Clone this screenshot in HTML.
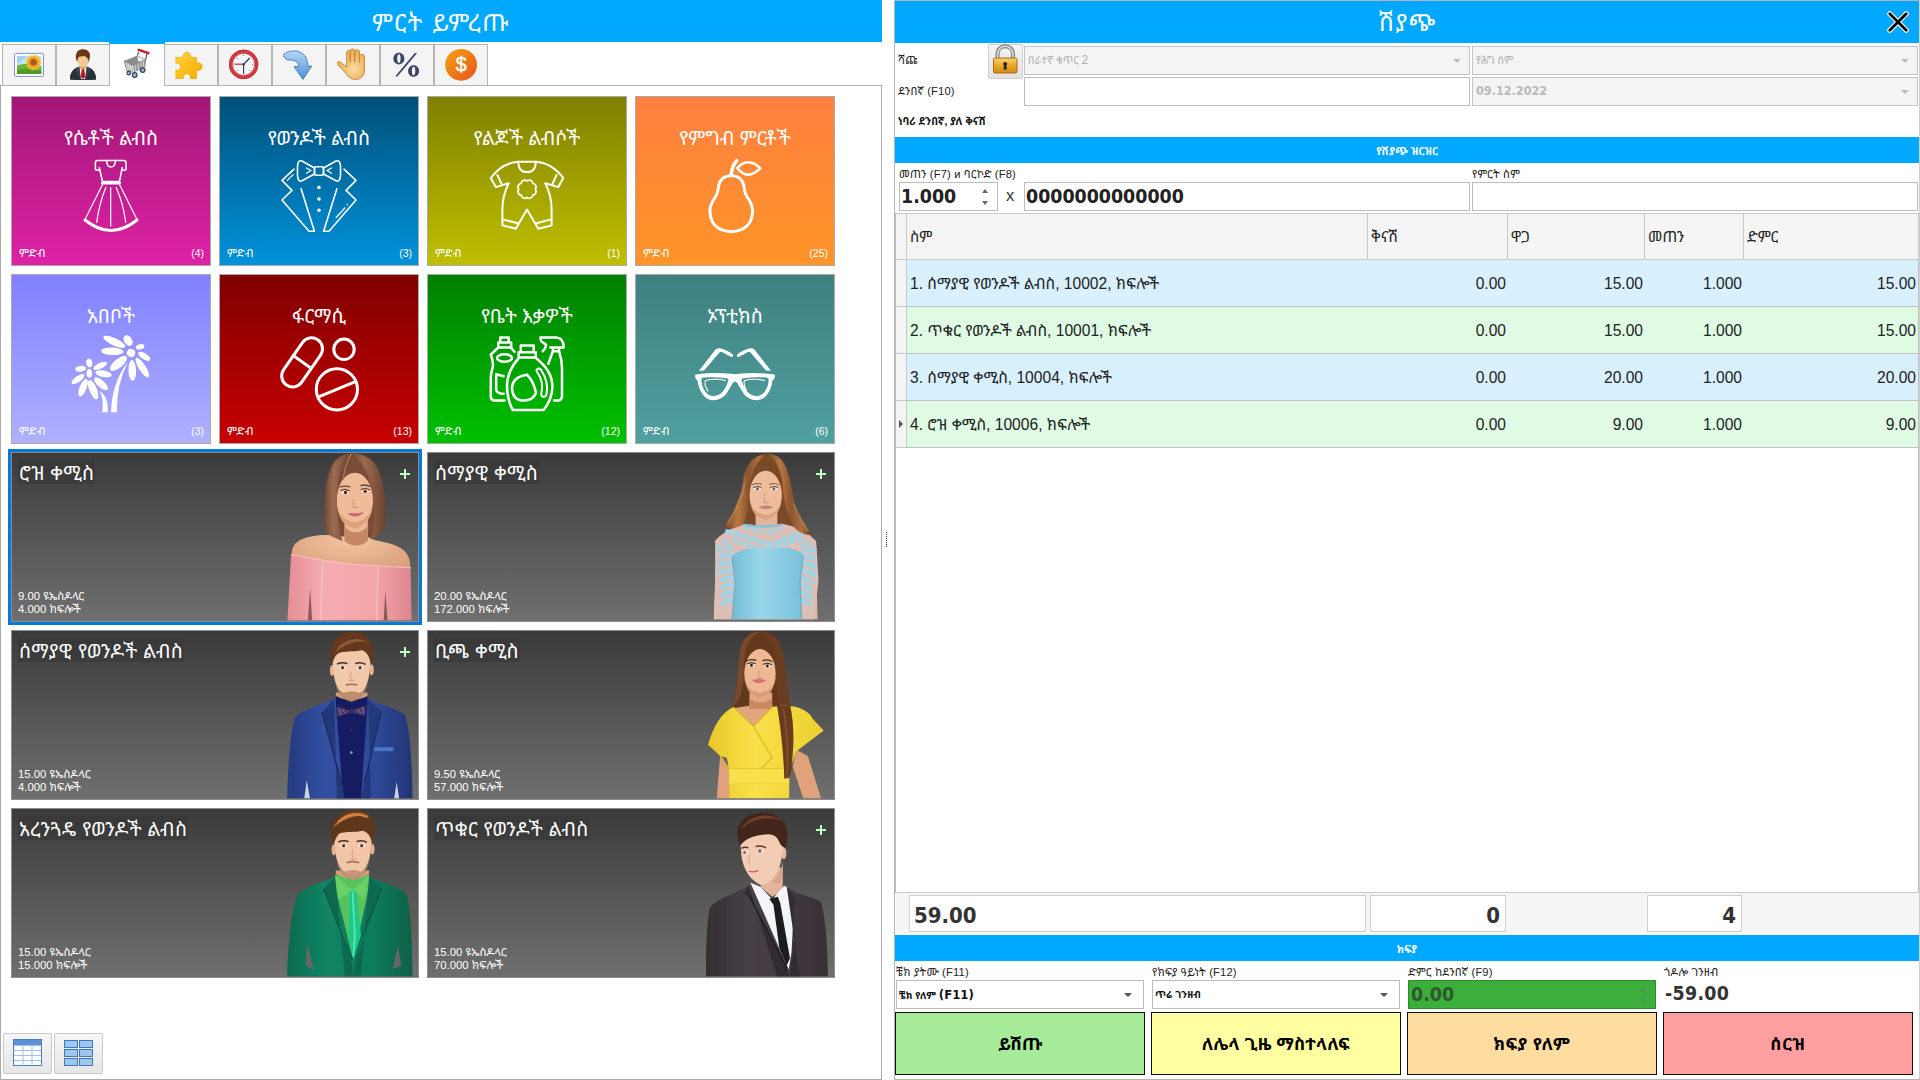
<!DOCTYPE html>
<html lang="am">
<head>
<meta charset="utf-8">
<title>ሽያጭ</title>
<style>
*{box-sizing:border-box;margin:0;padding:0}
html,body{width:1920px;height:1080px;overflow:hidden;background:#fff}
body{position:relative;font-family:"Liberation Sans","Noto Sans Ethiopic","Ebrima","Nyala","Abyssinica SIL",sans-serif;font-size:11px;color:#222}
.abs{position:absolute}
.blue{background:#00a8ff}
/* ---------- left panel ---------- */
#lhead{left:0;top:0;width:882px;height:42px}
#ltitle{left:0;top:9px;width:882px;text-align:center;color:#fff;font-size:24px;line-height:28px;letter-spacing:1.6px}
#lbody{left:0;top:85px;width:882px;height:995px;border:1px solid #acacac;background:#fff}
.tab{position:absolute;top:44px;width:54px;height:42px;background:#f4f4f4;border:1px solid #b4b4b4}
.tab.on{top:44px;height:43px;background:#fff;border:0;width:54px}
.tab svg{position:absolute;left:10px;top:3px;width:32px;height:32px}
.tile{position:absolute;width:200px;height:170px;border:1px solid #a9a9a9;color:#fff}
.tile .tt{position:absolute;left:0;right:0;top:28px;text-align:center;font-size:19.5px;line-height:26px;white-space:nowrap}
.tile .cat{position:absolute;left:7px;bottom:5px;font-size:11.5px;line-height:14px;letter-spacing:.4px}
.tile .cnt{position:absolute;right:6px;bottom:5px;font-size:10.5px;line-height:14px}
.tile svg{position:absolute;left:-1px;top:-1px;width:200px;height:170px}
.card{position:absolute;width:408px;height:170px;border:1px solid #8d8d8d;background:linear-gradient(#3b3b3b,#6f6f6f);color:#fff;overflow:hidden}
.card .nm{position:absolute;left:6px;top:7px;height:24px;padding:0 1px 0 1px;background:rgba(52,52,52,.5);font-size:19.5px;line-height:26px;letter-spacing:.3px;white-space:nowrap}
.card .pr{position:absolute;left:6px;bottom:5px;font-size:11.3px;line-height:13px;white-space:nowrap}
.card .plus{position:absolute;right:8px;top:16px;width:10px;height:10px}
.card .plus:before{content:"";position:absolute;left:0;top:4px;width:10px;height:2px;background:#bfffc0}
.card .plus:after{content:"";position:absolute;left:4px;top:0;width:2px;height:10px;background:#bfffc0}
.card svg.ph{position:absolute;left:268px;top:-3px;width:140px;height:175px}
#sel{left:8px;top:449px;width:414px;height:176px;border:3px solid #0a78d7}
.vbtn{position:absolute;top:1033px;width:49px;height:41px;border:1px solid #c9c9c9;border-radius:2px;background:linear-gradient(#f6f6f6,#e6e6e6)}
.vbtn svg{position:absolute;left:9px;top:5px;width:30px;height:28px}
/* ---------- right panel ---------- */
#rpanel{left:894px;top:0;width:1026px;height:1080px;border:1px solid #b4b4b4;border-right:1px solid #d0d0d0;background:#fff}
#rhead{left:895px;top:1px;width:1024px;height:42px}
#rtitle{left:895px;top:9px;width:1025px;text-align:center;color:#fff;font-size:24px;line-height:28px;letter-spacing:.6px}
.lbl{position:absolute;font-size:11.2px;line-height:14px;letter-spacing:.15px;white-space:nowrap;color:#222;margin-left:-1px}
.inp{position:absolute;background:#fff;border:1px solid #bdbdbd}
.inp.dis{background:#f4f4f4;border-color:#c4c4c4;color:#b0b0b0}
.inp .tx{position:absolute;left:3px;top:0;white-space:nowrap}
.arr{position:absolute;right:8px;top:50%;margin-top:-2px;width:0;height:0;border-left:4px solid transparent;border-right:4px solid transparent;border-top:4px solid #555}
.dis .arr{border-top-color:#bcbcbc}
.bar{position:absolute;left:895px;width:1024px;height:26px;color:#fff;text-align:center;font-weight:bold;font-size:10.5px;line-height:28px;overflow:hidden}
.big{font-family:"DejaVu Sans Condensed","DejaVu Sans","Liberation Sans",sans-serif;font-weight:bold;font-size:19.4px;color:#222}
#grid{left:895px;top:213px;width:1024px;height:680px;border:1px solid #c0c0c0;background:#fff}
.hd{position:absolute;top:213px;height:47px;background:#f5f5f5;border-right:1px solid #c9c9c9;border-bottom:1px solid #c9c9c9;border-top:1px solid #c9c9c9;font-size:15px;line-height:46px;padding-left:3px;color:#222}
.row{position:absolute;left:907px;width:1011px;height:47px;border-bottom:1px solid #bfbfbf;font-size:15.6px;line-height:47px;color:#222}
.row.b{background:#d8f0ff}
.row.g{background:#dffbe3}
.row span{position:absolute;top:0;white-space:nowrap}
.row .n{left:3px}
.row .r{text-align:right}
.ind{position:absolute;left:896px;width:11px;height:47px;background:#f5f5f5;border-right:1px solid #c9c9c9;border-bottom:1px solid #c9c9c9}
.btn{position:absolute;top:1012px;width:250px;height:63px;border:1px solid #111;text-align:center;font-weight:bold;font-size:17.2px;line-height:62px;color:#000}
#closex{left:1887px;top:11px;width:22px;height:22px}
#lock{left:988px;top:44px;width:35px;height:35px;border:1px solid #d0d0d0;border-radius:2px;background:linear-gradient(#f4f4f4,#e2e2e2)}
#fbar{left:896px;top:892px;width:1023px;height:43px;background:#f5f5f5;border-top:1px solid #c9c9c9}
.tot{top:895px;height:37px;border-color:#cfcfcf}
.tot .tx{line-height:39px;font-size:22px;color:#333}
.cur{position:absolute;left:3px;top:19px;width:0;height:0;border-top:4px solid transparent;border-bottom:4px solid transparent;border-left:4px solid #555}
#split{left:886px;top:532px;width:1px;height:16px;background:repeating-linear-gradient(#333 0 1px,transparent 1px 2px)}
</style>
</head>
<body>
<!-- LEFT PANEL -->
<div class="abs blue" id="lhead"></div>
<div class="abs" id="ltitle">ምርት ይምረጡ</div>
<div class="abs" id="lbody"></div>
<div id="tabs">
<div class="tab" style="left:2px"><svg viewBox="0 0 32 32"><rect x="1.500" y="5.400" width="29" height="23" rx="1" fill="#fff" stroke="#7f8fd0" stroke-width="1"/><rect x="4" y="8" width="24.300" height="18" fill="#bfe3f7"/><path d="M4 8h10l-10 8z" fill="#9fd0f0"/><path d="M4 17.500Q14 14 28.300 18V26H4z" fill="#6db535"/><path d="M4 22Q16 19 28.300 23V26H4z" fill="#4f9a23"/><circle cx="20.500" cy="14.500" r="6.800" fill="#f4a620"/><circle cx="20.500" cy="14.500" r="6.800" fill="none" stroke="#f9c74a" stroke-width="2.400" stroke-dasharray="1.500 1.300"/><circle cx="20.500" cy="14.300" r="3.300" fill="#a85a1c"/></svg></div>
<div class="tab" style="left:56px"><svg viewBox="0 0 32 32"><path d="M3 31.500C3 23 8 19.500 12.500 18.500L16 20l3.500-1.500C24 19.500 29 23 29 31.500Q16 32.500 3 31.500z" fill="#3b424c"/><path d="M3 31.500C3 26 5 23 8 21L14 31.800zM29 31.500C29 26 27 23 24 21L18 31.800z" fill="#2a3038"/><path d="M12.500 18.800L16 22.500l3.500-3.700L18 31h-4z" fill="#fff"/><path d="M14.800 20.500h2.400l1 8.500L16 31l-2.200-2z" fill="#c4161c"/><path d="M13 15h6v5l-3 1.500-3-1.500z" fill="#d9a066"/><ellipse cx="16.200" cy="12.700" rx="5.500" ry="6.700" fill="#f3c894"/><path d="M10.300 14C7 8 9.500 1.500 15 1.200 21 .5 24.500 5 22.500 11 22.300 13 22 14 21.800 14.500 21.500 11 20 8.500 17 8 14 8.500 11.500 8 10.800 11 10.500 12.500 10.500 13.500 10.300 14z" fill="#6b3514"/></svg></div>
<div class="abs blue" style="left:109px;top:42px;width:56px;height:2px"></div>
<div class="tab on" style="left:110px"><svg viewBox="0 0 32 32" style="left:11px;top:2px"><path d="M17.800 6L16.400 9.600M25.900 7.800L24.700 13.600" stroke="#4a4a52" stroke-width="1.100"/><path d="M17.600 3.800L27.500 7.200" stroke="#c81e28" stroke-width="2.400" stroke-linecap="round"/><path d="M3.100 14.900L16.400 9.500L24.700 13.400L11.400 19.600z" fill="#8c8c8c"/><path d="M16.400 10.300L23.800 13.700L23.200 17.800L17 14.900z" fill="#f4f4f4"/><path d="M3.100 14.900L11.400 19.600L12.500 26.100L6 25z" fill="#b9b9b9" stroke="#6e6e6e" stroke-width=".7"/><path d="M11.400 19.600L24.700 13.400L23.800 20.800L12.500 26.100z" fill="#9a9a9a" stroke="#6e6e6e" stroke-width=".7"/><path d="M5 16.200l1.800 8.800M7 17.200l1.500 8M9.200 18.400l1.300 7.400M14 18.600l.8 6.400M17 17.200l.6 6.500M20 15.800l.4 6.400M22.500 14.600l.2 6.200" stroke="#e8e8e8" stroke-width=".7"/><path d="M11.400 19.600L12.500 26.100" stroke="#fff" stroke-width="1"/><g fill="#9ab6d2" stroke="#2f4258" stroke-width="1.200"><circle cx="7.800" cy="27" r="1.800"/><circle cx="13.700" cy="29" r="2.300"/><circle cx="21.700" cy="24.100" r="2.300"/></g></svg></div>
<div class="tab" style="left:164px"><svg viewBox="0 0 32 32"><defs><linearGradient id="pz" x1="0" y1="0" x2="1" y2="1"><stop offset="0" stop-color="#ffd83a"/><stop offset="1" stop-color="#f5a800"/></linearGradient></defs><path d="M.8 9.300H8.700A3.600 3.600 0 1 1 15.100 9.300H21.600V15.300A3.800 3.800 0 1 1 21.600 21.900V30.500H15.200A3.500 3.500 0 1 0 8.600 30.500H.8V21.900A3.500 3.500 0 1 0 .8 15.300z" fill="url(#pz)" stroke="#eda400" stroke-width=".6"/></svg></div>
<div class="tab" style="left:218px"><svg viewBox="0 0 32 32"><circle cx="14.600" cy="16.400" r="12.900" fill="#f3f7fc" stroke="#d4393d" stroke-width="3.400"/><circle cx="14.600" cy="16.400" r="14.400" fill="none" stroke="#b82428" stroke-width=".6"/><circle cx="14.600" cy="16.400" r="11" fill="none" stroke="#a82226" stroke-width=".6"/><path d="M14.600 16.400l6.200-6.400" stroke="#2f3b55" stroke-width="1.300"/><path d="M14.600 16.400v9.600" stroke="#2f3b55" stroke-width="1.100"/><path d="M14.600 16.200H5.400" stroke="#d4393d" stroke-width="1.300"/><circle cx="14.600" cy="16.400" r="1.200" fill="#2f3b55"/><g fill="#555"><circle cx="14.600" cy="7.400" r=".5"/><circle cx="23.600" cy="16.400" r=".5"/><circle cx="8.300" cy="10.200" r=".5"/><circle cx="20.900" cy="22.600" r=".5"/><circle cx="8.300" cy="22.600" r=".5"/></g></svg></div>
<div class="tab" style="left:272px"><svg viewBox="0 0 32 32"><defs><linearGradient id="ar" x1="0" y1="0" x2="0" y2="1"><stop offset="0" stop-color="#b4d8f4"/><stop offset="1" stop-color="#4f8fd4"/></linearGradient></defs><path d="M-.4 7.500C4 3 10 2.500 14 3.200C20.500 4.500 24.500 9 24.800 18.100H28.800L19.900 31.400L11.100 18.600H15.900C15.600 14 12 11.500 4.400 12z" fill="url(#ar)" stroke="#3f78c4" stroke-width=".9"/></svg></div>
<div class="tab" style="left:326px"><svg viewBox="0 0 32 32"><defs><radialGradient id="hd" cx=".6" cy=".65" r=".5"><stop offset="0" stop-color="#f9d9a0"/><stop offset="1" stop-color="#efb360"/></radialGradient></defs><path d="M9.700 19V4.300C9.700 1.800 13.300 1.800 13.300 4.300V13V2.900C13.300 .3 17.700 .3 17.700 2.900V13V3.700C17.700 1.200 22.500 1.200 22.500 3.700V13.500V8.200C22.500 5.800 27.400 5.800 27.400 8.200V22C27.400 27.500 24 31.400 18.500 31.400C14 31.400 11.500 29 9 25.500L.8 16.500C-.7 14.500 1.500 12.600 3.400 14.200z" fill="url(#hd)" stroke="#c78a3c" stroke-width="1"/><path d="M13.300 5V14.500M17.700 4V14.500M22.500 5V15" stroke="#c78a3c" stroke-width="1" fill="none"/></svg></div>
<div class="tab" style="left:380px"><svg viewBox="0 0 32 32"><g fill="#3a4566"><path d="M7.900 4.800C4.800 4.800 2.400 7.300 2.400 10.600S4.800 16.400 7.900 16.400 13.400 13.900 13.400 10.600 11 4.800 7.900 4.800zM7.900 6.300C9 6.300 9.600 8 9.600 10.600S9 14.900 7.900 14.900 6.200 13.200 6.200 10.600 6.800 6.300 7.900 6.300z" fill-rule="evenodd"/><path d="M22.600 17.200C19.500 17.200 17.100 19.700 17.100 23S19.500 28.800 22.600 28.800 28.100 26.300 28.100 23 25.700 17.200 22.600 17.200zM22.600 18.700C23.700 18.700 24.300 20.400 24.300 23S23.700 27.300 22.600 27.300 20.900 25.600 20.900 23 21.500 18.700 22.600 18.700z" fill-rule="evenodd"/><path d="M23.800 5L26 5.200L6.400 28.500L4.300 28.300z"/></g></svg></div>
<div class="tab" style="left:434px"><svg viewBox="0 0 32 32" style="overflow:visible;left:11px"><defs><linearGradient id="dl" x1="0" y1="0" x2="1" y2="1"><stop offset="0" stop-color="#f6a20c"/><stop offset="1" stop-color="#e8541f"/></linearGradient></defs><circle cx="15.100" cy="16.800" r="15.900" fill="url(#dl)"/><text x="15.100" y="23.200" text-anchor="middle" font-family="Liberation Sans,sans-serif" font-weight="normal" font-size="19.500" stroke="#fff" stroke-width=".5" fill="#fff">$</text></svg></div>
</div>
<div id="tiles">
<div class="tile" style="left:11px;top:96px;background:linear-gradient(#a21776,#de22a6)"><svg viewBox="0 0 200 170"><g fill="none" stroke="#fff" stroke-linecap="round" stroke-linejoin="round" stroke-width="1.5"><path d="M95.500 64.500H86.500Q84.400 64.500 84.400 66.800V73.800L88.300 74.600V71.500L91.500 85.500H108.500L111.200 71.500V74.600L115 73.800V66.800Q115 64.500 112.800 64.500H104.500"/><path d="M95.500 64.500Q96 71 100 71T104.500 64.500z"/><path d="M91.500 88.500L74 123.500M108.500 88.500L126 123.500M99.700 91.500V130M94.800 91.500Q88 108 85.700 126.500M105.200 91.500Q112.500 108 114.700 126.500" stroke-width="1.200"/><path d="M91.300 87H108.500" stroke-width="3"/><path d="M74 124Q100 145 126 124" stroke-width="3"/></g></svg><div class="tt">የሴቶች ልብስ</div><div class="cat">ምድብ</div><div class="cnt">(4)</div></div>
<div class="tile" style="left:219px;top:96px;background:linear-gradient(#005079,#0092db)"><svg viewBox="0 0 200 170"><g fill="none" stroke="#fff" stroke-linecap="round" stroke-linejoin="round" stroke-width="1.600"><path d="M95.500 72L83 65Q79 63.500 78.500 70V79.500Q79 86.500 83 84.800L95.500 78z"/><path d="M104.500 72L117 65Q121 63.500 121.500 70V79.500Q121 86.500 117 84.800L104.500 78z"/><rect x="95.500" y="70.700" width="9" height="8.500" rx="1.500"/><path d="M87.500 72L92 74.500L87.500 77.200M112.500 72L108 74.500L112.500 77.200" stroke-width="1.200"/><path d="M75 73.200L63 84.400L73 94.400L63 104L90 135.300H95.400L82.100 92.800"/><path d="M125 73.200L137 84.400L127 94.400L137 104L110 135.300H104.600L117.900 92.800"/><path d="M74.200 78.600L68.300 84.400M117.100 121.500L125.800 112" stroke-width="1.200"/></g><g fill="#fff"><circle cx="100" cy="91.500" r="1.800"/><circle cx="100" cy="103" r="1.800"/><circle cx="100" cy="114.200" r="1.800"/><circle cx="128.300" cy="108.600" r=".8"/></g></svg><div class="tt">የወንዶች ልብስ</div><div class="cat">ምድብ</div><div class="cnt">(3)</div></div>
<div class="tile" style="left:427px;top:96px;background:linear-gradient(#808000,#bfbf00)"><svg viewBox="0 0 200 170"><g fill="none" stroke="#fff" stroke-linecap="round" stroke-linejoin="round" stroke-width="2"><path d="M91.300 65.700Q75 67 63.800 82L68.800 91.100L81.700 87.300Q75.400 100 75.400 113V129.400L88.800 132.800L100 113.600L111.300 132.800L124.600 129.400V113Q124.600 100 118.300 87.300L131.300 91.100L136.300 82Q125 67 108.800 65.700z"/><path d="M91.300 65.700Q91.300 76.100 100 76.100T108.800 65.700"/><path d="M70.400 79L75 88.800M129.600 79L125 88.800M76.700 123.600L90.800 127.300M123.300 123.600L109.200 127.300"/><path d="M100.0 84.9A3.7 3.7 0 0 1 105.9 87.3A3.7 3.7 0 0 1 108.3 93.2A3.7 3.7 0 0 1 105.9 99.1A3.7 3.7 0 0 1 100.0 101.5A3.7 3.7 0 0 1 94.1 99.1A3.7 3.7 0 0 1 91.7 93.2A3.7 3.7 0 0 1 94.1 87.3A3.7 3.7 0 0 1 100.0 84.9z" stroke-width="1.800"/></g></svg><div class="tt">የልጆች ልብሶች</div><div class="cat">ምድብ</div><div class="cnt">(1)</div></div>
<div class="tile" style="left:635px;top:96px;background:linear-gradient(#ff8040,#ff9428)"><svg viewBox="0 0 200 170"><g fill="none" stroke="#fff" stroke-linecap="round" stroke-linejoin="round" stroke-width="3"><path d="M101.700 64.600Q97 70 96.300 78.200" stroke-width="3.600"/><path d="M102.300 72Q108 66 113.300 66.300Q120 66.500 125.200 72.300Q119 78.600 113.300 78.600Q107 78.500 102.300 72z" stroke-width="2.600"/><path d="M96.300 79.600Q85.500 80 83.500 90Q83 98 79 103Q74.500 110 75 116Q76 134.500 96.300 135.800Q116.500 134.500 117.500 116Q118 110 113.500 103Q109.500 98 109 90Q107 80 96.300 79.600z"/></g></svg><div class="tt">የምግብ ምርቶች</div><div class="cat">ምድብ</div><div class="cnt">(25)</div></div>
<div class="tile" style="left:11px;top:274px;background:linear-gradient(#8080ff,#b0b0ff)"><svg viewBox="0 0 200 170"><g fill="#fff"><ellipse cx="103.3" cy="67.8" rx="12.0" ry="3.7" transform="rotate(25 103.3 67.8)"/><ellipse cx="101.3" cy="77.3" rx="11.2" ry="3.8" transform="rotate(2 101.3 77.3)"/><ellipse cx="117.1" cy="66.5" rx="5.7" ry="3.9" transform="rotate(55 117.1 66.5)"/><ellipse cx="129.2" cy="72.8" rx="4.4" ry="2.6" transform="rotate(-15 129.2 72.8)"/><ellipse cx="133.3" cy="82.3" rx="7.0" ry="3.0" transform="rotate(33 133.3 82.3)"/><ellipse cx="131.3" cy="93.6" rx="11.5" ry="3.5" transform="rotate(58 131.3 93.6)"/><ellipse cx="121.3" cy="96.5" rx="10.4" ry="3.8" transform="rotate(88 121.3 96.5)"/><ellipse cx="107.5" cy="89.4" rx="10.5" ry="4.3" transform="rotate(-40 107.5 89.4)"/><ellipse cx="120" cy="79" rx="4.2" ry="4.0" transform="rotate(20 120 79)"/><ellipse cx="78.3" cy="89" rx="4.2" ry="3.0" transform="rotate(80 78.3 89)"/><ellipse cx="89.2" cy="91.9" rx="7.5" ry="3.0" transform="rotate(-25 89.2 91.9)"/><ellipse cx="92.5" cy="99.8" rx="8.3" ry="3.3" transform="rotate(10 92.5 99.8)"/><ellipse cx="90" cy="109.8" rx="8.8" ry="3.5" transform="rotate(42 90 109.8)"/><ellipse cx="82.1" cy="115.7" rx="10.2" ry="3.8" transform="rotate(68 82.1 115.7)"/><ellipse cx="72.1" cy="113.6" rx="9.4" ry="3.5" transform="rotate(112 72.1 113.6)"/><ellipse cx="67.1" cy="105" rx="7.7" ry="3.0" transform="rotate(-35 67.1 105)"/><ellipse cx="69.6" cy="94.8" rx="5.4" ry="3.0" transform="rotate(-5 69.6 94.8)"/><ellipse cx="78.3" cy="99.4" rx="2.7" ry="4.3" transform="rotate(0 78.3 99.4)"/><path d="M116.900 88Q101 108 100 138.200H105.800Q105.500 110 116.900 88zM88.300 116.900Q93 124 91.300 138.200H96.700Q97.500 122 88.300 116.900z"/></g></svg><div class="tt">አበቦች</div><div class="cat">ምድብ</div><div class="cnt">(3)</div></div>
<div class="tile" style="left:219px;top:274px;background:linear-gradient(#800000,#c80000)"><svg viewBox="0 0 200 170"><g fill="none" stroke="#fff" stroke-linecap="round" stroke-linejoin="round" stroke-width="3"><rect x="72.100" y="60.900" width="22" height="55" rx="11" transform="rotate(34.700 83.100 88.400)"/><path d="M74.200 81.500L91.700 94"/><circle cx="125" cy="75.300" r="10.200"/><circle cx="117.900" cy="115.300" r="20.600"/><path d="M100.800 122.300L135.800 107.800"/></g></svg><div class="tt">ፋርማሲ</div><div class="cat">ምድብ</div><div class="cnt">(13)</div></div>
<div class="tile" style="left:427px;top:274px;background:linear-gradient(#008000,#00c000)"><svg viewBox="0 0 200 170"><g fill="none" stroke="#fff" stroke-linecap="round" stroke-linejoin="round" stroke-width="2.500"><path d="M93.800 78.200V71.500H106.700V78.200M91.700 78.200H108.800V83.600H91.700z"/><path d="M92.100 83.600Q80 97 80 112.300Q80 125 85.800 136.100H116.700Q125.400 125 125.400 112.300Q125.400 97 108.300 83.600"/><path d="M100 100.700Q85 103 85 114.800Q86 126.500 96.700 126.500Q106 126.500 109 119Q107 108 100 100.700z"/><path d="M109.800 97.500Q117.500 108 114.200 120.500Q114.500 123 117 122.800Q119.300 122.500 119.500 120Q122 108 114 95.800Q112 93.800 110 95.300Q109 96.200 109.800 97.500z" stroke-width="2"/><path d="M73.300 68.600V63.600H81.700V68.600M71.300 73.600V68.600H84.200V73.600z"/><path d="M70.800 74L63.800 80.700Q66.500 87 65.800 93.200Q63.800 99 63.800 104V123.200Q64 126.500 67.500 126.500H77.500M84.200 74L87.500 77.800"/><ellipse cx="77.500" cy="84" rx="7.500" ry="3.800"/><path d="M76.700 102.300L69.200 100.300V116Q70 119.800 76.700 119.800"/><path d="M113.300 63.600H129.200Q136.700 64 136.700 73.600H123.300M113.300 63.600L114.200 67.300L119.200 70.700Q118.500 75 115.800 77.300M126 74.200V77.300H132V74.200"/><path d="M125.800 77.300L121.300 89.800M132.100 77.300Q135 86 135 94V122.300Q134.500 126.500 130.800 126.500H127.100"/></g></svg><div class="tt">የቤት እቃዎች</div><div class="cat">ምድብ</div><div class="cnt">(12)</div></div>
<div class="tile" style="left:635px;top:274px;background:linear-gradient(#408080,#50a0a0)"><svg viewBox="0 0 200 170"><g fill="#fff"><path d="M60 102.300Q59.500 100.500 62 100.300Q80 98 96 99.800Q100 100.400 104 99.800Q120 98 138 100.300Q140.500 100.500 140 102.300Q139.700 105.500 137.500 106.500Q136.500 115 131.500 121.500Q127 126.500 121.500 126.200Q113 125.800 108.500 119.500Q105 114 102.300 109Q100 105.800 97.700 109Q95 114 91.500 119.500Q87 125.800 78.500 126.200Q73 126.500 68.500 121.500Q63.500 115 62.500 106.500Q60.300 105.500 60 102.300zM66.500 104.800Q66 112 70.500 118Q74 122.300 78.500 122Q85.500 121.500 89 116Q92.500 110.500 93.500 106Q93.500 104.500 91.500 104.300Q80 102.500 68.500 103.500Q66.700 103.700 66.500 104.800zM133.500 104.800Q134 112 129.500 118Q126 122.300 121.500 122Q114.500 121.500 111 116Q107.500 110.500 106.500 106Q106.500 104.500 108.500 104.300Q120 102.500 131.500 103.500Q133.300 103.700 133.500 104.800z" fill-rule="evenodd"/><path d="M64 96.800L80.500 75.500Q82.500 73.800 86 74.500Q94 77 97.800 80.500Q98.500 82.500 97 83.300Q91 80.500 87 78Q85.500 77.500 84.500 78.500L69 96.500zM136 96.800L119.500 75.500Q117.500 73.800 114 74.500Q106 77 102.200 80.500Q101.500 82.500 103 83.300Q109 80.500 113 78Q114.500 77.500 115.500 78.500L131 96.500z"/></g><g fill="none" stroke="#fff" stroke-width="1.100" stroke-linecap="round"><path d="M73 117Q68.500 110 70.500 106.500Q80 104 90.500 106.500"/><path d="M111.500 117Q108 110 109.500 106.500Q119 104 129.500 106.500"/></g></svg><div class="tt">ኦፕቲክስ</div><div class="cat">ምድብ</div><div class="cnt">(6)</div></div>
</div>
<div id="cards">
<div class="abs" id="sel"></div>
<div class="card" style="left:11px;top:452px"><svg class="ph" viewBox="0 0 864 1080"><defs>
<filter id="sf" x="-5%" y="-5%" width="110%" height="110%"><feGaussianBlur stdDeviation="3"/></filter>
<filter id="sf2" x="-10%" y="-10%" width="120%" height="120%"><feGaussianBlur stdDeviation="9"/></filter>
<linearGradient id="h1" x1="0" y1="0" x2="1" y2="0"><stop offset="0" stop-color="#6f4532"/><stop offset=".35" stop-color="#9a6b52"/><stop offset=".6" stop-color="#8c5d45"/><stop offset="1" stop-color="#6a402e"/></linearGradient>
<linearGradient id="d1" x1="0" y1="0" x2="1" y2="0"><stop offset="0" stop-color="#e58d95"/><stop offset=".3" stop-color="#f6adb1"/><stop offset=".7" stop-color="#f3a4a9"/><stop offset="1" stop-color="#dd858e"/></linearGradient>
<radialGradient id="sk" cx=".5" cy=".4" r=".7"><stop offset="0" stop-color="#f3c4a3"/><stop offset="1" stop-color="#d99e7a"/></radialGradient>
<linearGradient id="h2" x1="0" y1="0" x2="1" y2="0"><stop offset="0" stop-color="#7a4828"/><stop offset=".3" stop-color="#b87a45"/><stop offset=".55" stop-color="#8a5530"/><stop offset=".8" stop-color="#b0703e"/><stop offset="1" stop-color="#70401f"/></linearGradient>
<linearGradient id="d2" x1="0" y1="0" x2="1" y2="0"><stop offset="0" stop-color="#74bcd6"/><stop offset=".4" stop-color="#9ad6ea"/><stop offset="1" stop-color="#78c0da"/></linearGradient>
<linearGradient id="j3" x1="0" y1="0" x2="1" y2="0"><stop offset="0" stop-color="#253a80"/><stop offset=".3" stop-color="#3150a2"/><stop offset=".7" stop-color="#2e4a98"/><stop offset="1" stop-color="#223474"/></linearGradient>
<linearGradient id="d4" x1="0" y1="0" x2="1" y2="0"><stop offset="0" stop-color="#e8c828"/><stop offset=".4" stop-color="#f8e04a"/><stop offset="1" stop-color="#ecd030"/></linearGradient>
<linearGradient id="j5" x1="0" y1="0" x2="1" y2="0"><stop offset="0" stop-color="#0a6a50"/><stop offset=".3" stop-color="#128464"/><stop offset=".7" stop-color="#0f7a5c"/><stop offset="1" stop-color="#096048"/></linearGradient>
<linearGradient id="j6" x1="0" y1="0" x2="1" y2="0"><stop offset="0" stop-color="#352e34"/><stop offset=".35" stop-color="#474046"/><stop offset="1" stop-color="#383137"/></linearGradient>
</defs>
<g filter="url(#sf)">
<path d="M450 20C330 20 290 120 282 250C276 350 262 440 280 500C320 540 360 550 385 562L560 548C612 530 642 500 650 440C656 350 642 200 602 110C572 50 520 20 450 20Z" fill="#7a4d39"/>
<path d="M398 430V535C300 515 150 520 92 580C68 612 68 655 74 700L802 745C812 680 790 620 720 592C650 562 565 560 542 535V430Z" fill="url(#sk)"/>
<path d="M398 470C430 520 500 520 542 470V560C500 600 440 600 398 560Z" fill="#c58763"/>
<ellipse cx="462" cy="312" rx="112" ry="172" fill="#efbb98"/>
<path d="M360 330C365 420 400 470 462 486C520 470 560 420 566 330C560 400 520 440 462 446C400 440 366 400 360 330Z" fill="#dfa07c"/>
<path d="M440 22C365 60 352 200 352 330C350 400 362 480 386 562C330 542 292 522 280 500C258 400 280 200 330 92C360 42 400 24 440 22Z" fill="url(#h1)"/>
<path d="M440 22C520 80 570 180 580 330C586 420 580 500 560 548C612 530 642 500 650 440C656 330 642 180 592 100C562 50 500 24 440 22Z" fill="url(#h1)"/>
<path d="M440 24C420 60 400 110 392 170" stroke="#b98a70" stroke-width="6" fill="none"/>
</g>
<ellipse cx="402" cy="262" rx="24" ry="10" fill="#f6e8e0"/><ellipse cx="528" cy="255" rx="24" ry="10" fill="#f6e8e0"/>
<circle cx="404" cy="262" r="10" fill="#3a2620"/><circle cx="526" cy="255" r="10" fill="#3a2620"/>
<path d="M372 250q30-16 58 2M498 244q30-16 58 2" stroke="#3a2620" stroke-width="6" fill="none"/>
<path d="M368 230q34-14 66-2M496 220q34-10 62 6" stroke="#6a4634" stroke-width="8" fill="none"/>
<path d="M420 392q46 34 94-4q-46 10-94 4z" fill="#c9677a" stroke="#c9677a" stroke-width="6"/>
<path d="M455 300q-10 40 12 52M445 352q18 10 38 0" stroke="#cf9470" stroke-width="6" fill="none"/>
<g filter="url(#sf)">
<path d="M68 646C200 660 350 700 520 706C650 716 750 720 806 722L812 1050H46Z" fill="url(#d1)"/>
<path d="M262 690L250 1050M604 716L598 1050" stroke="#f9c4c6" stroke-width="8"/>
<path d="M70 648C200 664 350 704 520 710C650 720 750 724 806 726" stroke="#f9c0c2" stroke-width="7" fill="none"/>
<path d="M186 850L198 1050H172ZM650 870L640 1050H664Z" fill="#8a5a58"/>
</g></svg><div class="nm">ሮዝ ቀሚስ</div><div class="pr">9.00 ዩኤስዶላር<br>4.000 ክፍሎች</div><div class="plus"></div></div>
<div class="card" style="left:427px;top:452px"><svg class="ph" viewBox="0 0 864 1080"><g filter="url(#sf)">
<path d="M440 22C360 25 300 90 290 200C280 280 250 330 235 380C215 430 175 440 180 480C200 470 240 470 300 440L330 560H560L600 470C640 520 690 530 705 520C690 470 640 440 620 380C600 320 590 200 560 120C535 55 500 22 440 22Z" fill="#7a4826"/>
<path d="M368 380V470C330 500 200 500 130 560L110 1045H750L740 560C700 510 540 500 502 470V380Z" fill="#e3b39a"/>
<ellipse cx="430" cy="280" rx="100" ry="152" fill="#efbd9d"/>
<path d="M334 300C340 380 380 425 430 432C480 425 520 380 526 300C520 360 480 395 430 400C380 395 340 360 334 300Z" fill="#dca284"/>
</g>
<ellipse cx="378" cy="240" rx="22" ry="9" fill="#f4ece8"/><ellipse cx="482" cy="240" rx="22" ry="9" fill="#f4ece8"/>
<circle cx="379" cy="240" r="9" fill="#4a6a88"/><circle cx="481" cy="240" r="9" fill="#4a6a88"/>
<path d="M352 232q26-14 52 0M456 232q26-14 52 0" stroke="#4a3020" stroke-width="5" fill="none"/>
<path d="M346 214q30-14 60-2M452 212q32-12 60 4" stroke="#8a6040" stroke-width="7" fill="none"/>
<path d="M392 352q38 22 80 0q-40 -14-80 0z" fill="#c98077" stroke="#c98077" stroke-width="5"/>
<path d="M425 270q-8 40 8 52M412 322q18 10 38 0" stroke="#d39c7c" stroke-width="6" fill="none"/>
<g filter="url(#sf)">
<path d="M118 560C180 490 260 470 300 455C380 470 460 470 530 455C600 470 700 500 742 570L756 800L730 1045H110L118 800Z" fill="#dcc0b6"/>
<g fill="none" stroke="#a2d5e8" opacity=".95">
<path d="M134 590q30 50 16 110t26 110q-12 70 -4 150" stroke-width="30" stroke-dasharray="36 14"/>
<path d="M168 560q26 60 14 120t22 110q-10 70 -2 170" stroke-width="30" stroke-dasharray="30 16" stroke-dashoffset="12"/>
<path d="M202 560q22 60 12 120t18 110q-6 70 -2 170" stroke-width="28" stroke-dasharray="34 14" stroke-dashoffset="25"/>
<path d="M734 600q-28 50-10 110t-28 110q10 60 4 140" stroke-width="30" stroke-dasharray="36 14"/>
<path d="M702 570q-24 60-8 120t-24 110q8 70 2 160" stroke-width="30" stroke-dasharray="30 16" stroke-dashoffset="12"/>
<path d="M670 560q-18 60-6 120t-20 110q6 70 2 160" stroke-width="28" stroke-dasharray="34 14" stroke-dashoffset="25"/>
<path d="M180 505q70 10 130 30t110 40q60 10 120-20t140-45" stroke-width="34" stroke-dasharray="40 12"/>
<path d="M230 555q70 20 110 40t90 20q50-10 100-30t120-35" stroke-width="32" stroke-dasharray="36 12" stroke-dashoffset="20"/>
<path d="M300 480q60 20 130 22t110-20" stroke-width="22" stroke-dasharray="30 18"/>
</g>
<path d="M290 462C380 476 460 476 535 460" stroke="#7fc4dd" stroke-width="14" fill="none"/>
<path d="M225 650C300 600 400 590 450 620C520 590 600 600 660 640L640 820L650 1045H225L245 820Z" fill="url(#d2)"/>
<path d="M222 660L242 820L222 1045M662 650L642 820L652 1045" stroke="#5f9cb4" stroke-width="8" fill="none" opacity=".7"/>
<path d="M440 25C380 60 340 130 330 230C322 300 330 370 300 440C290 470 240 490 180 480C175 440 215 430 235 380C250 330 280 280 290 200C300 90 360 28 440 25Z" fill="url(#h2)"/>
<path d="M440 25C500 60 530 140 535 230C540 320 560 380 600 470C640 520 690 530 705 520C690 470 640 440 620 380C600 320 590 200 560 120C535 55 500 25 440 25Z" fill="url(#h2)"/>
<path d="M262 330q-30 60 -70 130M600 330q40 90 90 170M300 200q-10 80-40 130" stroke="#c8905a" stroke-width="8" fill="none" opacity=".8"/>
</g></svg><div class="nm">ሰማያዊ ቀሚስ</div><div class="pr">20.00 ዩኤስዶላር<br>172.000 ክፍሎች</div><div class="plus"></div></div>
<div class="card" style="left:11px;top:630px"><svg class="ph" viewBox="0 0 864 1080"><g filter="url(#sf)">
<path d="M96 545C150 500 260 470 335 440L545 440C620 470 720 500 770 535C800 620 815 800 818 1050H44C50 800 70 620 96 545Z" fill="url(#j3)"/>
<path d="M345 400H540V470L500 1050H390L345 470Z" fill="#181e62"/>
<path d="M335 440L258 520L385 975L400 1050H350ZM545 440L625 515L520 960L500 1050H560Z" fill="#24397a"/>
<path d="M258 520L385 975M625 515L520 960" stroke="#1a2a5e" stroke-width="7" fill="none"/>
<path d="M345 420Q440 470 540 420V398H345Z" fill="#d09c7c"/>
<ellipse cx="322" cy="262" rx="14" ry="34" fill="#e9b18f"/><ellipse cx="565" cy="258" rx="14" ry="34" fill="#e9b18f"/>
<ellipse cx="442" cy="190" rx="120" ry="150" fill="#f2c8aa"/>
<path d="M328 200C325 300 340 400 440 452C540 400 558 300 555 200Z" fill="#f2c8aa"/>
<path d="M340 330Q360 440 440 455Q520 440 545 330Q525 390 490 400Q440 380 395 400Q360 390 340 330Z" fill="#b48464" opacity=".85"/>
<path d="M322 222C296 130 326 56 400 32C476 8 548 40 570 110C580 150 572 195 560 222C552 180 540 150 505 138C455 150 395 140 358 158C338 172 330 198 322 222Z" fill="#63371f"/>
<path d="M340 150C380 70 480 45 550 92C500 72 420 84 340 150Z" fill="#8f5a38"/>
</g>
<ellipse cx="385" cy="245" rx="22" ry="9" fill="#f2e6e0"/><ellipse cx="495" cy="245" rx="22" ry="9" fill="#f2e6e0"/>
<circle cx="386" cy="245" r="9" fill="#3a2418"/><circle cx="494" cy="245" r="9" fill="#3a2418"/>
<path d="M352 222q32-14 64-2M464 220q34-12 64 4" stroke="#4a2c1c" stroke-width="9" fill="none"/>
<path d="M405 352q36-10 72 0" stroke="#a06a50" stroke-width="9" fill="none"/>
<path d="M438 270q-8 40 6 50M424 322q18 10 36 0" stroke="#d09c7c" stroke-width="6" fill="none"/>
<g filter="url(#sf)">
<path d="M350 485L440 510L530 478L525 540L440 522L355 548Z" fill="#4b3a66"/>
<path d="M360 495l20 40M385 500l16 24M480 500l20 30M505 488l14 40" stroke="#8a6a90" stroke-width="6"/>
<rect x="425" y="498" width="30" height="30" fill="#3a2c52"/>
<rect x="582" y="736" width="118" height="24" fill="#4a76c4"/>
<circle cx="440" cy="768" r="8" fill="#9aa4c8"/><circle cx="437" cy="630" r="5" fill="#3a4488"/>
<path d="M165 940L150 1050H185ZM720 950L735 1050H705Z" fill="#cfd4de"/>
</g></svg><div class="nm">ሰማያዊ የወንዶች ልብስ</div><div class="pr">15.00 ዩኤስዶላር<br>4.000 ክፍሎች</div><div class="plus"></div></div>
<div class="card" style="left:427px;top:630px"><svg class="ph" viewBox="0 0 864 1080"><g filter="url(#sf)">
<path d="M400 22C320 22 275 80 268 170C260 280 250 400 222 490L330 500L480 500L520 940L575 930C610 800 615 600 580 470C560 380 560 250 530 130C510 60 470 22 400 22Z" fill="#63381d"/>
<path d="M330 400V480L230 495L355 615L475 490L470 480V400Z" fill="#e2a57e"/><path d="M150 780L210 870V1050H128ZM615 750L690 790L772 1050H662L598 860Z" fill="#e0a27a"/>
<path d="M330 430C360 470 430 470 470 430V500H330Z" fill="#c98a62"/>
<ellipse cx="395" cy="282" rx="97" ry="152" fill="#edb893"/>
<path d="M302 300C308 380 345 425 395 434C445 425 482 380 488 300C480 365 445 398 395 402C345 398 310 365 302 300Z" fill="#d99c78"/>
<path d="M400 22C330 50 300 120 296 220C292 330 300 420 222 490C250 400 260 280 268 170C275 80 320 22 400 22Z" fill="#7a482c"/>
<path d="M400 22C460 50 485 120 490 220C495 330 500 420 520 500L540 930L575 930C610 800 615 600 580 470C560 380 560 250 530 130C510 60 470 22 400 22Z" fill="#6b3d21"/>
</g>
<ellipse cx="340" cy="230" rx="22" ry="9" fill="#f2e6e0"/><ellipse cx="440" cy="234" rx="22" ry="9" fill="#f2e6e0"/>
<circle cx="342" cy="230" r="9" fill="#35221a"/><circle cx="440" cy="234" r="9" fill="#35221a"/>
<path d="M314 222q26-16 54-2M414 224q28-14 54 2" stroke="#2a1a14" stroke-width="6" fill="none"/>
<path d="M308 204q32-16 64-4M410 202q34-12 62 6" stroke="#4a2c1c" stroke-width="8" fill="none"/>
<path d="M350 322q36 30 78 2q-38-12-78-2z" fill="#d4707a" stroke="#d4707a" stroke-width="6"/>
<path d="M388 262q-8 34 6 44M374 308q18 10 36 0" stroke="#cf9472" stroke-width="6" fill="none"/>
<g filter="url(#sf)">
<path d="M232 488L355 608L470 488C560 470 680 480 720 560L788 632L620 760L575 870V1050H205V880L190 800L150 790L74 720C110 600 160 520 232 488Z" fill="url(#d4)"/>
<path d="M355 608L470 800L400 870M210 870H575M210 955H570M232 488L355 608L470 488" stroke="#d6b81e" stroke-width="7" fill="none"/>
<path d="M205 870H575V960H205Z" fill="#f7e04a"/>
<path d="M620 760L575 870M150 790L205 880" stroke="#d0b020" stroke-width="8"/>
<path d="M500 480C520 600 540 760 545 930L575 925C605 800 612 620 582 480Z" fill="#6a3b1e"/>
<path d="M540 500C560 620 570 780 560 925" stroke="#8a5530" stroke-width="8" fill="none"/>
</g></svg><div class="nm">ቢጫ ቀሚስ</div><div class="pr">9.50 ዩኤስዶላር<br>57.000 ክፍሎች</div></div>
<div class="card" style="left:11px;top:808px"><svg class="ph" viewBox="0 0 864 1080"><g filter="url(#sf)">
<path d="M110 545C160 500 260 470 340 440L550 440C630 470 730 500 780 540C805 620 815 800 818 1050H44C50 800 80 620 110 545Z" fill="url(#j5)"/>
<path d="M340 425H550V500L452 945L340 500Z" fill="#58c35c"/>
<path d="M340 440L268 510L440 940L452 1050H400ZM550 440L628 510L470 940L455 1050H500Z" fill="#0a6a50"/>
<path d="M268 510L445 945L628 510" stroke="#075540" stroke-width="7" fill="none"/>
<path d="M345 420Q448 480 550 420V398H345Z" fill="#d09c7c"/>
<path d="M340 428L365 575L448 520L520 580L550 428L448 520Z" fill="#68d268"/>
<path d="M430 525L470 525L500 800L452 945L425 800Z" fill="#1fc98a"/>
<path d="M448 530L462 800L452 930" stroke="#5ee8b0" stroke-width="10" fill="none"/>
<ellipse cx="332" cy="270" rx="14" ry="34" fill="#e6ae8c"/><ellipse cx="570" cy="266" rx="14" ry="34" fill="#e6ae8c"/>
<ellipse cx="450" cy="200" rx="118" ry="150" fill="#f1c5a6"/>
<path d="M338 200C335 300 350 400 450 455C550 400 566 300 562 200Z" fill="#f1c5a6"/>
<path d="M350 340Q370 440 450 458Q530 440 552 340Q532 395 498 405Q450 385 402 405Q370 395 350 340Z" fill="#b98a6c" opacity=".8"/>
<path d="M330 240C296 150 316 88 380 48C440 8 524 18 564 70C596 112 586 192 570 240C562 195 550 165 512 152C462 164 402 154 366 170C346 188 340 214 330 240Z" fill="#5f381f"/>
<path d="M328 135C380 38 480 18 552 65C480 50 400 72 328 135Z" fill="#b56d35"/>
<path d="M360 100C410 50 480 40 540 70" stroke="#d08a48" stroke-width="10" fill="none"/>
</g>
<ellipse cx="392" cy="245" rx="22" ry="9" fill="#f2e6e0"/><ellipse cx="505" cy="245" rx="22" ry="9" fill="#f2e6e0"/>
<circle cx="393" cy="245" r="9" fill="#3a2a22"/><circle cx="504" cy="245" r="9" fill="#3a2a22"/>
<path d="M360 222q32-14 64-2M472 220q34-12 64 4" stroke="#4a2c1c" stroke-width="9" fill="none"/>
<path d="M410 350q40-14 80 0" stroke="#a87058" stroke-width="10" fill="none"/>
<path d="M448 270q-8 44 6 54M432 326q18 10 38 0" stroke="#d09c7c" stroke-width="6" fill="none"/>
<path d="M168 850L210 1008L158 985ZM728 860L696 1008L748 985Z" fill="#666" filter="url(#sf)"/></svg><div class="nm">አረንጓዴ የወንዶች ልብስ</div><div class="pr">15.00 ዩኤስዶላር<br>15.000 ክፍሎች</div></div>
<div class="card" style="left:427px;top:808px"><svg class="ph" viewBox="0 0 864 1080"><g filter="url(#sf)">
<path d="M86 625C130 570 250 540 325 490L560 500C640 560 740 560 772 595C800 700 812 850 814 1050H62C60 850 70 700 86 625Z" fill="url(#j6)"/>
<path d="M400 380H535V520L470 560L400 500Z" fill="#e4b59c"/>
<path d="M335 472L400 500L470 575L545 490L565 505L600 700L590 900L572 1010Z" fill="#f3f3f8"/>
<path d="M452 572L505 560L520 600L580 940L560 985L515 880L478 610Z" fill="#1b1b1f"/>
<path d="M325 490L295 540L330 560L560 1000L575 1050H500ZM560 500L620 580L600 620L610 800L580 1050H640Z" fill="#332c34"/>
<path d="M330 560L565 1005" stroke="#201b22" stroke-width="8" fill="none"/>
<ellipse cx="542" cy="292" rx="16" ry="36" fill="#eab59b"/>
<ellipse cx="410" cy="210" rx="140" ry="150" fill="#f3ccb4"/>
<path d="M278 220C270 330 300 440 400 488C470 480 540 400 535 220Z" fill="#f3ccb4"/>
<path d="M470 470C530 420 540 340 536 300V400L520 480Z" fill="#d8a388"/>
<path d="M272 245C236 160 256 88 330 58C400 28 484 38 534 90C576 132 566 205 556 255C538 260 522 244 512 218C502 192 482 178 452 175C392 178 320 184 272 245Z" fill="#43261a"/>
<path d="M270 150C320 60 440 30 530 90C440 60 340 80 270 150Z" fill="#6a3f2a"/>
</g>
<ellipse cx="305" cy="287" rx="18" ry="9" fill="#f0e4de"/><ellipse cx="400" cy="278" rx="22" ry="9" fill="#f0e4de"/>
<circle cx="300" cy="287" r="8" fill="#4a5a54"/><circle cx="394" cy="278" r="9" fill="#4a5a54"/>
<path d="M280 262q20-12 44-4M368 250q34-10 64 8" stroke="#5a3826" stroke-width="9" fill="none"/>
<path d="M325 402q30 8 60-2" stroke="#b8706a" stroke-width="9" fill="none"/>
<path d="M335 300q-20 44 0 60" stroke="#d69f84" stroke-width="6" fill="none"/></svg><div class="nm">ጥቁር የወንዶች ልብስ</div><div class="pr">15.00 ዩኤስዶላር<br>70.000 ክፍሎች</div><div class="plus"></div></div>
</div>
<div id="views">
<div class="vbtn" style="left:3px"><svg viewBox="0 0 30 28"><rect x=".5" y=".5" width="28" height="26" fill="#fff" stroke="#4a7fc4"/><rect x="1" y="1" width="27" height="5.500" fill="#5b93d6"/><path d="M1 6.500h27M1 11.500h27M1 16.500h27M1 21.500h27M10 6.500v20M19 6.500v20" stroke="#9ec0ea" stroke-width="1" fill="none"/></svg></div>
<div class="vbtn" style="left:54px"><svg viewBox="0 0 30 28"><g fill="#9cc8ee" stroke="#3f78c0"><rect x=".5" y="1.500" width="13" height="7"/><rect x="15.500" y="1.500" width="13" height="7"/><rect x=".5" y="10.500" width="13" height="7"/><rect x="15.500" y="10.500" width="13" height="7"/><rect x=".5" y="19.500" width="13" height="7"/><rect x="15.500" y="19.500" width="13" height="7"/></g></svg></div>
</div>
<!-- RIGHT PANEL -->
<div class="abs" id="rpanel"></div>
<div class="abs blue" id="rhead"></div>
<div class="abs" id="rtitle">ሽያጭ</div>
<div id="rform">
<div class="abs" id="closex"><svg viewBox="0 0 24 24" width="22" height="22"><path d="M3 3L21 21M21 3L3 21" stroke="#fff" stroke-width="5.500" stroke-linecap="round"/><path d="M3 3L21 21M21 3L3 21" stroke="#000" stroke-width="3" stroke-linecap="round"/></svg></div>
<div class="lbl" style="left:899px;top:53px">ሻጩ</div>
<div class="abs" id="lock"><svg viewBox="0 0 34 34" width="34" height="34" style="overflow:visible"><defs><linearGradient id="lk" x1="0" y1="0" x2="0" y2="1"><stop offset="0" stop-color="#f7d46a"/><stop offset=".5" stop-color="#eaa928"/><stop offset="1" stop-color="#d08a18"/></linearGradient></defs><path d="M8.500 14V9.500C8.500 -1.500 24 -1.500 24 9.500V14" fill="none" stroke="#7f7f7f" stroke-width="4"/><path d="M8.500 14V9.500C8.500 -1.500 24 -1.500 24 9.500V14" fill="none" stroke="#dedede" stroke-width="1.600"/><rect x="4.500" y="13" width="23.500" height="15" rx="1.500" fill="url(#lk)" stroke="#a86a10" stroke-width="1"/><circle cx="16.200" cy="19" r="2" fill="#222"/><path d="M15.300 19.500h1.800l.9 5h-3.600z" fill="#222"/></svg></div>
<div class="inp dis" style="left:1024px;top:46px;width:446px;height:29px"><span class="tx" style="font-size:10.500px;line-height:26px">በራተኛ ቁጥር <span style="font-size:12px">2</span></span><i class="arr"></i></div>
<div class="inp dis" style="left:1472px;top:46px;width:446px;height:29px"><span class="tx" style="font-size:10.500px;line-height:26px">የሕግ ስም</span><i class="arr"></i></div>
<div class="lbl" style="left:899px;top:84px">ደንበኛ (F10)</div>
<div class="inp" style="left:1024px;top:77px;width:446px;height:29px"></div>
<div class="inp dis" style="left:1472px;top:77px;width:446px;height:29px"><span class="tx" style="font-family:'DejaVu Sans Condensed','DejaVu Sans',sans-serif;font-weight:bold;font-size:12.500px;line-height:26px;color:#b9b9b9">09.12.2022</span><i class="arr"></i></div>
<div class="lbl" style="left:899px;top:114px;font-weight:bold;color:#111;font-size:10.5px;letter-spacing:0">ነባሪ ደንበኛ, ያለ ቅናሽ</div>
<div class="bar blue" style="top:137px">የሽያጭ ዝርዝር</div>
<div class="lbl" style="left:900px;top:167px">መጠን (F7) и ባርኮድ (F8)</div>
<div class="lbl" style="left:1473px;top:167px">የምርት ስም</div>
<div class="inp" style="left:899px;top:182px;width:99px;height:29px"><span class="tx big" style="left:1px;line-height:27px">1.000</span><i class="arr" style="right:9px;margin-top:-8px;border-top:0;border-bottom:4px solid #666;border-left-width:3.500px;border-right-width:3.500px"></i><i class="arr" style="right:9px;margin-top:4px;border-top-color:#666;border-left-width:3.500px;border-right-width:3.500px"></i></div>
<div class="lbl" style="left:1007px;top:186px;font-size:16.5px;line-height:18px;color:#333">x</div>
<div class="inp" style="left:1024px;top:182px;width:446px;height:29px"><span class="tx big" style="left:1px;line-height:27px">0000000000000</span></div>
<div class="inp" style="left:1472px;top:182px;width:446px;height:29px"></div>
</div>
<div id="rgrid">
<div class="abs" id="grid"></div>
<div class="hd" style="left:896px;width:11px"></div><div class="hd" style="left:907px;width:461px">ስም</div><div class="hd" style="left:1368px;width:140px">ቅናሽ</div><div class="hd" style="left:1508px;width:137px">ዋጋ</div><div class="hd" style="left:1645px;width:99px">መጠን</div><div class="hd" style="left:1744px;width:175px">ድምር</div>
<div class="ind" style="top:260px"></div><div class="row b" style="top:260px"><span class="n">1. ሰማያዊ የወንዶች ልብስ, 10002, ክፍሎች</span><span class="r" style="right:412px">0.00</span><span class="r" style="right:275px">15.00</span><span class="r" style="right:176px">1.000</span><span class="r" style="right:2px">15.00</span></div>
<div class="ind" style="top:307px"></div><div class="row g" style="top:307px"><span class="n">2. ጥቁር የወንዶች ልብስ, 10001, ክፍሎች</span><span class="r" style="right:412px">0.00</span><span class="r" style="right:275px">15.00</span><span class="r" style="right:176px">1.000</span><span class="r" style="right:2px">15.00</span></div>
<div class="ind" style="top:354px"></div><div class="row b" style="top:354px"><span class="n">3. ሰማያዊ ቀሚስ, 10004, ክፍሎች</span><span class="r" style="right:412px">0.00</span><span class="r" style="right:275px">20.00</span><span class="r" style="right:176px">1.000</span><span class="r" style="right:2px">20.00</span></div>
<div class="ind" style="top:401px"><i class="cur"></i></div><div class="row g" style="top:401px"><span class="n">4. ሮዝ ቀሚስ, 10006, ክፍሎች</span><span class="r" style="right:412px">0.00</span><span class="r" style="right:275px">9.00</span><span class="r" style="right:176px">1.000</span><span class="r" style="right:2px">9.00</span></div>
</div>
<div id="rfoot">
<div class="abs" id="fbar"></div>
<div class="inp tot" style="left:909px;width:457px"><span class="tx big" style="left:4px">59.00</span></div>
<div class="inp tot" style="left:1370px;width:136px"><span class="tx big" style="right:5px;left:auto">0</span></div>
<div class="inp tot" style="left:1647px;width:95px"><span class="tx big" style="right:5px;left:auto">4</span></div>
<div class="bar blue" style="top:935px">ክፍያ</div>
<div class="lbl" style="left:897px;top:965px">ቼክ ያትሙ (F11)</div>
<div class="lbl" style="left:1153px;top:965px">የክፍያ ዓይነት (F12)</div>
<div class="lbl" style="left:1409px;top:965px">ድምር ከደንበኛ (F9)</div>
<div class="lbl" style="left:1665px;top:965px">ጎዶሎ ገንዘብ</div>
<div class="inp" style="left:896px;top:980px;width:248px;height:29px"><span class="tx" style="left:2px;font-weight:bold;font-size:10px;line-height:27px;color:#111">ቼክ የለም <span style="font-family:'DejaVu Sans Condensed','DejaVu Sans',sans-serif;font-size:13px">(F11)</span></span><i class="arr" style="right:11px"></i></div>
<div class="inp" style="left:1152px;top:980px;width:248px;height:29px"><span class="tx" style="left:2px;font-weight:bold;font-size:10px;line-height:27px;color:#111">ጥሬ ገንዘብ</span><i class="arr" style="right:11px"></i></div>
<div class="inp" style="left:1408px;top:980px;width:248px;height:29px;background:#3cae3c;border-color:#2f8a2f"><span class="tx big" style="left:2px;line-height:27px;color:#2c5a2c">0.00</span><i class="arr" style="right:9px;margin-top:-8px;border-top:0;border-bottom:4px solid #4f8f4f;border-left-width:3.500px;border-right-width:3.500px"></i><i class="arr" style="right:9px;margin-top:4px;border-top-color:#4f8f4f;border-left-width:3.500px;border-right-width:3.500px"></i></div>
<div class="abs big" style="left:1665px;top:981px;line-height:26px;color:#333;letter-spacing:.3px">-59.00</div>
<div class="btn" style="left:895px;background:#a6ec98;letter-spacing:-.6px">ይሽጡ</div>
<div class="btn" style="left:1151px;background:#ffffa2;letter-spacing:.2px">ለሌላ ጊዜ ማስተላለፍ</div>
<div class="btn" style="left:1407px;background:#ffdca0;letter-spacing:.6px">ክፍያ የለም</div>
<div class="btn" style="left:1663px;background:#ff9f9f;letter-spacing:.7px">ሰርዝ</div>
<div class="abs" id="split"></div>
</div>
</body>
</html>
